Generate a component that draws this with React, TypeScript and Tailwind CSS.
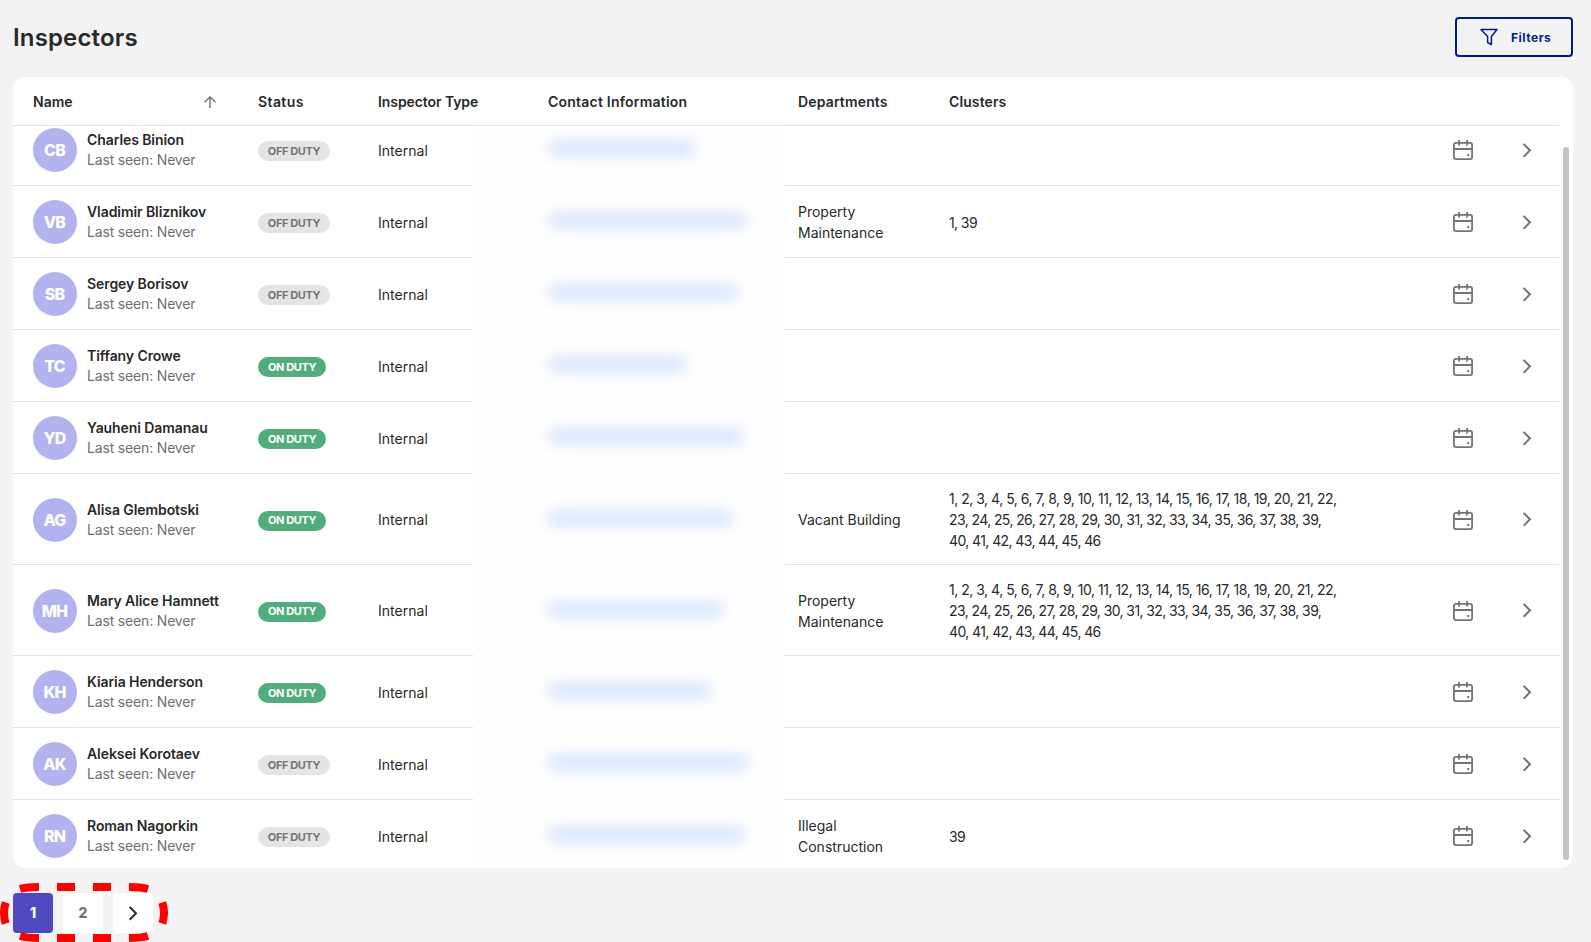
import React from "react";
import clsx from "clsx";

type Inspector = {
  initials: string;
  name: string;
  onDuty: boolean;
  contactWidth: string;
  department?: string;
  clusters?: string[];
};

const ALL = [
  "1, 2, 3, 4, 5, 6, 7, 8, 9, 10, 11, 12, 13, 14, 15, 16, 17, 18, 19, 20, 21, 22,",
  "23, 24, 25, 26, 27, 28, 29, 30, 31, 32, 33, 34, 35, 36, 37, 38, 39,",
  "40, 41, 42, 43, 44, 45, 46",
];

const inspectors: Inspector[] = [
  { initials: "CB", name: "Charles Binion", onDuty: false, contactWidth: "w-[147px]" },
  { initials: "VB", name: "Vladimir Bliznikov", onDuty: false, contactWidth: "w-[199px]", department: "Property Maintenance", clusters: ["1, 39"] },
  { initials: "SB", name: "Sergey Borisov", onDuty: false, contactWidth: "w-[190px]" },
  { initials: "TC", name: "Tiffany Crowe", onDuty: true, contactWidth: "w-[138px]" },
  { initials: "YD", name: "Yauheni Damanau", onDuty: true, contactWidth: "w-[195px]" },
  { initials: "AG", name: "Alisa Glembotski", onDuty: true, contactWidth: "w-[184px]", department: "Vacant Building", clusters: ALL },
  { initials: "MH", name: "Mary Alice Hamnett", onDuty: true, contactWidth: "w-[175px]", department: "Property Maintenance", clusters: ALL },
  { initials: "KH", name: "Kiaria Henderson", onDuty: true, contactWidth: "w-[163px]" },
  { initials: "AK", name: "Aleksei Korotaev", onDuty: false, contactWidth: "w-[200px]" },
  { initials: "RN", name: "Roman Nagorkin", onDuty: false, contactWidth: "w-[197px]", department: "Illegal Construction", clusters: ["39"] },
];

const columns = "grid grid-cols-[225px_120px_170px_250px_151px_504px_70px_36px] pl-5";

function CalendarIcon() {
  return (
    <svg width="20" height="20" viewBox="0 0 20 20" fill="none" stroke="#737373" strokeWidth="1.8">
      <rect x="0.9" y="2.9" width="18.2" height="16.2" rx="2" />
      <path d="M1 9h18M6 0v5.5M14 0v5.5" />
      <rect x="14.2" y="14" width="2" height="2" fill="#737373" stroke="none" />
    </svg>
  );
}

function ChevronIcon({ className }: { className: string }) {
  return (
    <svg width="9" height="15" viewBox="0 0 9 15" fill="none" stroke="currentColor" strokeWidth="2" className={className}>
      <path d="M.6 .9l6.4 6.4L.6 13.7" />
    </svg>
  );
}

function Row({ row }: { row: Inspector }) {
  const tall = (row.clusters?.length ?? 0) > 1;
  return (
    <div className={clsx(columns, "shrink-0 items-center border-b border-[#e2e2e2] pt-px", tall ? "h-[91px]" : "h-[72px]")}>
      <div className="flex items-center gap-2.5">
        <div className="flex size-11 items-center justify-center rounded-full bg-[#b1b2ee] pr-px text-base font-extrabold tracking-[-0.8px] text-white">
          {row.initials}
        </div>
        <div className="text-sm leading-5 whitespace-nowrap">
          <div className="font-semibold tracking-[-0.08px] text-[#292929]">{row.name}</div>
          <div className="tracking-[-0.17px] text-[#707070]">Last seen: Never</div>
        </div>
      </div>
      <div className="pt-0.5">
        <span
          className={clsx(
            "flex h-5 items-center justify-center rounded-full text-[11px] font-bold tracking-[-0.4px]",
            row.onDuty ? "w-[68px] bg-[#52ad7c] text-white" : "w-[72px] bg-[#e4e4e4] text-[#757575]",
          )}
        >
          {row.onDuty ? "ON DUTY" : "OFF DUTY"}
        </span>
      </div>
      <div className={clsx("text-sm tracking-[0.02px]", tall ? "pt-px" : "pt-0.5")}>Internal</div>
      <div className="relative z-10 -my-px -ml-[75px] flex h-[calc(100%+4px)] w-[312px] items-center self-start bg-[#fefefe] pl-[75px]">
        <div className={clsx("-mt-[5px] h-[15px] rounded-lg bg-[#d4e3fd] blur-[7px]", row.contactWidth)} />
      </div>
      <div className="w-28 text-sm leading-[21px]">{row.department}</div>
      <div className="text-sm leading-[21px] whitespace-nowrap">
        {row.clusters?.map((line, i) => (
          <div key={line} className={tall && i === 0 ? "tracking-[-0.49px]" : "tracking-[-0.6px]"}>
            {line}
          </div>
        ))}
      </div>
      <CalendarIcon />
      <ChevronIcon className="text-[#737373]" />
    </div>
  );
}

export default function App() {
  return (
    <div className="relative h-[942px] w-[1591px] overflow-hidden bg-[#f3f3f3] pl-[13px] font-[Inter,sans-serif] text-[#292929]">
      <header className="flex h-[77px] w-[1560px] items-start justify-between pt-[17px]">
        <h1 className="pt-px text-2xl leading-10 font-semibold tracking-[0.15px]">Inspectors</h1>
        <button className="flex h-10 w-[118px] items-center rounded border-2 border-[#001c8b] pl-[23px] text-xs font-bold tracking-[0.5px] text-[#001c8b]">
          <svg width="18" height="18" viewBox="0 0 18 18" fill="none" stroke="currentColor" strokeWidth="1.5" strokeLinejoin="round" className="mr-[13px]">
            <path d="M1 1.5h16l-5.6 7V16.5l-3.8-2V8.5z" />
          </svg>
          <span className="pt-px">Filters</span>
        </button>
      </header>

      <main className="flex h-[791px] w-[1560px] flex-col overflow-hidden rounded-xl bg-white">
        <div className={clsx(columns, "h-[49px] w-[1546px] shrink-0 items-center border-b border-[#e2e2e2] pt-0.5 text-sm font-semibold")}>
          <div className="flex items-center justify-between pr-[42px]">
            Name
            <svg width="12" height="12" viewBox="0 0 12 12" fill="none" stroke="#737373" strokeWidth="1.4">
              <path d="M6 12V1M.5 6.3L6 .9l5.5 5.4" />
            </svg>
          </div>
          <div className="tracking-[0.4px]">Status</div>
          <div className="tracking-[-0.08px]">Inspector Type</div>
          <div className="tracking-[0.22px]">Contact Information</div>
          <div className="tracking-[0.15px]">Departments</div>
          <div className="tracking-[0.1px]">Clusters</div>
        </div>
        <div className="flex min-h-0 flex-1">
          <div className="h-full w-[1546px] overflow-hidden">
            <div className="-mt-3 flex flex-col">
              {inspectors.map((row) => (
                <Row key={row.initials} row={row} />
              ))}
            </div>
          </div>
          <div className="mt-[21px] ml-1 h-[713px] w-1.5 rounded-full bg-[#c5c5c5]" />
        </div>
      </main>

      <nav className="mt-[25px] flex gap-2.5 text-sm font-extrabold">
        <button className="size-10 rounded bg-[#4e49c1] text-white">1</button>
        <button className="size-10 rounded bg-white text-[#737373]">2</button>
        <button className="flex size-10 items-center justify-center rounded bg-white">
          <ChevronIcon className="text-[#292929]" />
        </button>
      </nav>

      <svg width="168" height="62" viewBox="0 0 168 62" fill="none" stroke="#ff0000" strokeWidth="8" className="pointer-events-none absolute bottom-[-2px] left-0">
        <path d="M57 5h18M93 5h18M57 56h18M93 56h18" />
        <path d="M20 7Q27 5 39 5M129 5Q141 5 148 7M20 54Q27 56 39 56M129 56Q141 56 148 54" />
        <path d="M5.7 20.5Q2.3 31 5.7 41.5M162.3 20.5Q165.7 31 162.3 41.5" />
      </svg>
    </div>
  );
}
